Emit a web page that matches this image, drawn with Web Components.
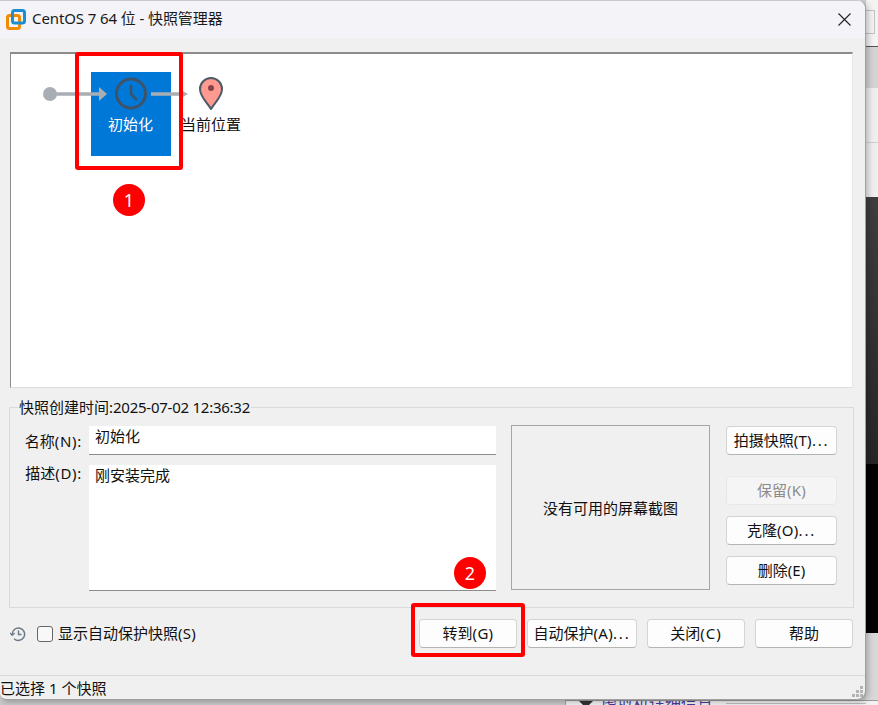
<!DOCTYPE html>
<html>
<head>
<meta charset="utf-8">
<style>
  html, body { margin: 0; padding: 0; overflow: hidden; }
  body { font: 15px/20px "Noto Sans", "Noto Sans CJK SC", sans-serif; color: #111; }
</style>
</head>
<body>
<vm-desktop>
  <vm-window title="CentOS 7 64 位 - 快照管理器">
    <snapshot-tree></snapshot-tree>
    <snapshot-details></snapshot-details>
    <snapshot-footer></snapshot-footer>
    <vm-status>已选择 1 个快照</vm-status>
  </vm-window>
  <red-mark style="left:75px;top:52px;width:108px;height:118px"></red-mark>
  <red-mark style="left:411px;top:603px;width:114px;height:54px"></red-mark>
  <step-badge style="left:113px;top:184px">1</step-badge>
  <step-badge style="left:454px;top:557px">2</step-badge>
</vm-desktop>

<script>
const define = (name, html) => {
  customElements.define(name, class extends HTMLElement {
    constructor() {
      super()
      this.attachShadow({ mode: 'open' }).innerHTML = html
    }
  })
}

// the page behind the dialog, only a strip of it shows
define('vm-desktop', `
  <style>
    :host { display: block; position: relative; width: 878px; height: 705px; overflow: hidden; background: #cfcfcf; }
    #right { position: absolute; right: 0; top: 0; width: 12px; height: 705px; display: flex; flex-direction: column; }
    #right div { flex: none; }
    #box { position: absolute; left: 0; top: 10px; width: 8px; height: 22px; border: 1px solid #c4c4c4; border-left: 0; }
    #bottom { position: absolute; left: 565px; right: 0; bottom: 0; height: 5px; background: #f2f2f2; border-top: 1px solid #9c9c9c; border-left: 1px solid #9c9c9c; box-sizing: border-box; overflow: hidden; }
    #bottom span { display: block; margin: -7px 0 0 35px; color: #4b3a9c; font-size: 16px; line-height: 20px; white-space: nowrap; }
    #tri { position: absolute; left: 13px; top: 0; width: 0; height: 0; border: 7px solid transparent; border-top-color: #333; border-bottom: 0; }
    #rule { position: absolute; left: 160px; right: 12px; top: 2px; height: 1px; background: #bdbdbd; }
    #left { position: absolute; left: 0; bottom: 0; width: 565px; height: 5px; background: #c9c9c9; }
  </style>
  <div id="right">
    <div style="height:46px;background:#f3f3f3;border-bottom:1px solid #555;position:relative"><div id="box"></div></div>
    <div style="height:41px;background:#d4d4d4"></div>
    <div style="height:54px;background:#efefef;border-bottom:1px solid #d0d0d0"></div>
    <div style="height:54px;background:#efefef"></div>
    <div style="height:267px;background:linear-gradient(#3e3e3e,#262626)"></div>
    <div style="height:169px;background:#000"></div>
    <div style="height:73px;background:#d8d8d8"></div>
  </div>
  <div id="bottom"><span>虚拟机详细信息</span><div id="tri"></div><div id="rule"></div></div>
  <div id="left"></div>
  <slot></slot>
`)

define('vm-window', `
  <style>
    :host {
      display: flex; flex-direction: column; position: absolute; left: 0; top: 0;
      width: 866px; height: 700px; box-sizing: border-box;
      background: #f0f0f0; border-right: 1px solid #a0a0a0; border-bottom: 1px solid #a0a0a0;
      border-radius: 0 9px 9px 6px; overflow: hidden; box-shadow: 2px 2px 6px rgba(0,0,0,.25);
    }
    #bar { flex: none; height: 38px; display: flex; align-items: center; background: #f3f3f8; border-top: 1px solid #c8c8c8; box-sizing: border-box; }
    #bar svg.logo { margin: 0 6px 0 6px; flex: none; }
    #title { flex: 1; font-size: 15px; letter-spacing: -.1px; color: #1a1a1a; padding-bottom: 3px; }
    #bar svg.close { margin-right: 14px; flex: none; }
  </style>
  <div id="bar">
    <svg class="logo" width="20" height="21" viewBox="0 0 20 21">
      <rect x="1.5" y="6.5" width="12" height="13" rx="2" fill="none" stroke="#f08c00" stroke-width="3"/>
      <rect x="6.5" y="1.5" width="12" height="12.5" rx="2" fill="none" stroke="#1b8fcf" stroke-width="3"/>
    </svg>
    <span id="title"></span>
    <svg class="close" width="13" height="13" viewBox="0 0 13 13"><path d="M.5.5l12 12M12.5.5l-12 12" stroke="#222" stroke-width="1.1" fill="none"/></svg>
  </div>
  <slot></slot>
`)
customElements.whenDefined('vm-window').then(() => {
  const win = document.querySelector('vm-window')
  win.shadowRoot.querySelector('#title').textContent = win.getAttribute('title')
})

// free canvas: node positions are the content here
define('snapshot-tree', `
  <style>
    :host {
      display: block; position: relative; flex: none; box-sizing: border-box;
      margin: 14px 0 0 10px; width: 843px; height: 336px; background: #fff;
      border-top: 2px solid #8c8c8c; border-left: 1px solid #8c8c8c; border-bottom: 1px solid #dcdcdc; border-right: 1px solid #e6e6e6;
    }
    svg { position: absolute; left: -11px; top: -54px; }
    #node { position: absolute; left: 80px; top: 18px; width: 80px; height: 84px; background: #0078d7; }
    span { position: absolute; white-space: nowrap; font-size: 15px; line-height: 20px; }
    #a { left: 97px; top: 60px; color: #fff; }
    #b { left: 170px; top: 60px; color: #111; }
  </style>
  <div id="node"></div>
  <svg width="300" height="140" viewBox="0 0 300 140">
    <circle cx="50" cy="94" r="7" fill="#a8aeb4"/>
    <path d="M55 94h44" stroke="#a8aeb4" stroke-width="3.5"/>
    <path d="M99 87l8 7-8 7z" fill="#a8aeb4"/>
    <path d="M151 94h30" stroke="#a8aeb4" stroke-width="3.5"/>
    <path d="M181 90l7 4-7 4z" fill="#a8aeb4"/>
    <circle cx="131" cy="93.5" r="14.5" fill="none" stroke="#3f5368" stroke-width="3"/>
    <path d="M131 85v9l6 6" fill="none" stroke="#3f5368" stroke-width="2.5"/>
    <path d="M211 109c-4-7-11-12-11-20a11 11 0 0 1 22 0c0 8-7 13-11 20z" fill="#ff9a90" stroke="#4c5a68" stroke-width="2" stroke-linejoin="round"/>
    <circle cx="211" cy="88" r="3" fill="#8a4048"/>
  </svg>
  <span id="a">初始化</span>
  <span id="b">当前位置</span>
`)

define('vm-button', `
  <style>
    :host {
      display: flex; align-items: center; justify-content: center; flex: none;
      box-sizing: border-box; height: 29px; padding-bottom: 2px; background: #fdfdfd; color: #111;
      border: 1px solid #d4d4d4; border-bottom-color: #b4b4b4; border-radius: 4px;
      font-size: 15px; white-space: nowrap;
    }
    :host([disabled]) { background: #f5f5f5; color: #8c8c8c; border-color: #e8e8e8; }
  </style>
  <slot></slot>
`)

define('snapshot-details', `
  <style>
    :host {
      display: block; flex: none; box-sizing: border-box; margin: 19px 0 0 9px;
      width: 845px; height: 201px; border: 1px solid #dadada;
    }
    #legend { width: fit-content; margin: -11px 0 0 8px; padding: 0 1px; background: #f0f0f0; line-height: 20px; }
    #legend i { font-style: normal; letter-spacing: -.25px; }
    #row { display: flex; margin-top: 9px; }
    #form { display: grid; grid-template-columns: 72px 407px; grid-template-rows: 29px 126px; column-gap: 7px; row-gap: 10px; }
    label { text-align: right; line-height: 20px; white-space: nowrap; }
    label i { font-style: normal; letter-spacing: .7px; }
    .l1 { padding-top: 5px; }
    .l2 { margin-top: -2px; }
    .field { background: #fff; border-bottom: 1px solid #8c8c8c; box-sizing: border-box; padding: 0 6px; line-height: 20px; }
    #shot {
      box-sizing: border-box; width: 199px; height: 165px; margin: -1px 16px 0 15px;
      border: 1px solid #a6a6a6; display: flex; align-items: center; justify-content: center;
    }
    #btns { display: flex; flex-direction: column; width: 111px; gap: 11px; }
    #btns vm-button:first-child { margin-bottom: 10px; }
    .p { letter-spacing: .3px; }
    .d { letter-spacing: 1.8px; }
  </style>
  <div id="legend">快照创建时间:<i>2025-07-02 12:36:32</i></div>
  <div id="row">
    <div id="form">
      <label class="l1">名称<i>(N):</i></label><div class="field">初始化</div>
      <label class="l2">描述<i>(D):</i></label><div class="field">刚安装完成</div>
    </div>
    <div id="shot">没有可用的屏幕截图</div>
    <div id="btns">
      <vm-button>拍摄快照<span class="p">(T)</span><span class="d">...</span></vm-button>
      <vm-button disabled>保留<span class="p">(K)</span></vm-button>
      <vm-button>克隆<span class="p">(O)</span><span class="d">...</span></vm-button>
      <vm-button>删除(E)</vm-button>
    </div>
  </div>
`)

define('snapshot-footer', `
  <style>
    :host { display: flex; align-items: center; flex: none; box-sizing: border-box; height: 67px; padding: 11px 12px 27px 10px; }
    svg { flex: none; margin-right: 11px; }
    #check { flex: none; box-sizing: border-box; width: 16px; height: 16px; border: 1px solid #666; border-radius: 3px; background: #f8f8f8; margin-right: 5px; }
    #text { flex: 1; white-space: nowrap; padding-bottom: 2px; }
    #text i { font-style: normal; letter-spacing: .3px; }
    vm-button { margin-left: 10px; width: 98px; }
    vm-button.wide { width: 110px; }
    .p { letter-spacing: .3px; }
    .w { letter-spacing: 1px; }
    .d { letter-spacing: 1.8px; }
  </style>
  <svg width="16" height="16" viewBox="0 0 16 16" fill="none" stroke="#6c7a88" stroke-width="1.5">
    <path d="M2.2 8.5a6.2 6.2 0 1 1 1.9 4.2"/>
    <path d="M0 7l2.2 2.4L4.6 7" stroke-width="1.3"/>
    <path d="M8.5 4.5V8.6H11.6"/>
  </svg>
  <div id="check"></div>
  <div id="text">显示自动保护快照<i>(S)</i></div>
  <vm-button>转到<span class="p">(G)</span></vm-button>
  <vm-button class="wide">自动保护<span class="p">(A)</span><span class="d">...</span></vm-button>
  <vm-button>关闭<span class="w">(C)</span></vm-button>
  <vm-button>帮助</vm-button>
`)

define('vm-status', `
  <style>
    :host { display: flex; align-items: center; flex: 1; position: relative; border-top: 1px solid #d8d8d8; line-height: 20px; padding-top: 1px; }
    svg { position: absolute; right: 1px; bottom: 1px; }
  </style>
  <slot></slot>
  <svg width="12" height="12" viewBox="0 0 12 12" fill="#b4b4b4">
    <rect x="8" y="0" width="3" height="3"/><rect x="4" y="4" width="3" height="3"/><rect x="8" y="4" width="3" height="3"/>
    <rect x="0" y="8" width="3" height="3"/><rect x="4" y="8" width="3" height="3"/><rect x="8" y="8" width="3" height="3"/>
  </svg>
`)

// annotations drawn over the screenshot
define('red-mark', `
  <style>:host { display: block; position: absolute; box-sizing: border-box; border: 4px solid #fe0000; border-radius: 3px; }</style>
`)

define('step-badge', `
  <style>
    :host {
      display: flex; position: absolute; width: 32px; height: 32px; border-radius: 50%;
      align-items: center; justify-content: center; background: #fe0000; color: #fff;
      font: 18px/32px "Noto Sans", sans-serif;
    }
  </style>
  <slot></slot>
`)
</script>
</body>
</html>
